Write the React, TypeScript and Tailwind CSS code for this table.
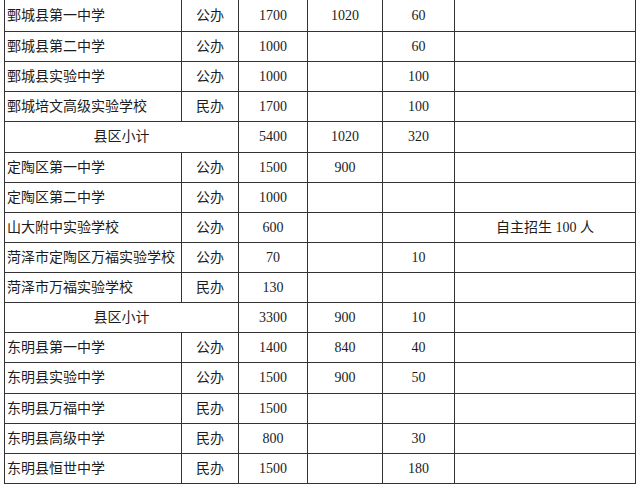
type Row =
  | { kind: "school"; name: string; type: string; plan: string; a?: string; b?: string; note?: string }
  | { kind: "subtotal"; plan: string; a?: string; b?: string };

const rows: Row[] = [
  { kind: "school", name: "鄄城县第一中学", type: "公办", plan: "1700", a: "1020", b: "60" },
  { kind: "school", name: "鄄城县第二中学", type: "公办", plan: "1000", b: "60" },
  { kind: "school", name: "鄄城县实验中学", type: "公办", plan: "1000", b: "100" },
  { kind: "school", name: "鄄城培文高级实验学校", type: "民办", plan: "1700", b: "100" },
  { kind: "subtotal", plan: "5400", a: "1020", b: "320" },
  { kind: "school", name: "定陶区第一中学", type: "公办", plan: "1500", a: "900" },
  { kind: "school", name: "定陶区第二中学", type: "公办", plan: "1000" },
  { kind: "school", name: "山大附中实验学校", type: "公办", plan: "600", note: "自主招生 100 人" },
  { kind: "school", name: "菏泽市定陶区万福实验学校", type: "公办", plan: "70", b: "10" },
  { kind: "school", name: "菏泽市万福实验学校", type: "民办", plan: "130" },
  { kind: "subtotal", plan: "3300", a: "900", b: "10" },
  { kind: "school", name: "东明县第一中学", type: "公办", plan: "1400", a: "840", b: "40" },
  { kind: "school", name: "东明县实验中学", type: "公办", plan: "1500", a: "900", b: "50" },
  { kind: "school", name: "东明县万福中学", type: "民办", plan: "1500" },
  { kind: "school", name: "东明县高级中学", type: "民办", plan: "800", b: "30" },
  { kind: "school", name: "东明县恒世中学", type: "民办", plan: "1500", b: "180" },
];

const cell = "flex items-center justify-center bg-white";

export default function App() {
  return (
    <div className="h-[491px] w-[640px] bg-white pl-1 text-[14px] text-[#1c1c1c] [font-family:'Liberation_Serif','Noto_Sans_CJK_SC',serif]">
      <div className="grid w-[632px] grid-cols-[176px_56px_68px_74px_71px_180px] grid-rows-[31px] auto-rows-[29.13px] gap-px bg-[#333] px-px pb-px">
        {rows.map((row, i) =>
          row.kind === "school" ? (
            <Line key={i} row={row} />
          ) : (
            <Subtotal key={i} row={row} />
          )
        )}
      </div>
    </div>
  );
}

function Line({ row }: { row: Extract<Row, { kind: "school" }> }) {
  return (
    <>
      <div className="flex items-center bg-white pl-[2px] whitespace-nowrap">{row.name}</div>
      <div className={cell}>{row.type}</div>
      <div className={cell}>{row.plan}</div>
      <div className={cell}>{row.a}</div>
      <div className={cell}>{row.b}</div>
      <div className={cell}>{row.note}</div>
    </>
  );
}

function Subtotal({ row }: { row: Extract<Row, { kind: "subtotal" }> }) {
  return (
    <>
      <div className={`${cell} col-span-2`}>县区小计</div>
      <div className={cell}>{row.plan}</div>
      <div className={cell}>{row.a}</div>
      <div className={cell}>{row.b}</div>
      <div className={cell} />
    </>
  );
}
